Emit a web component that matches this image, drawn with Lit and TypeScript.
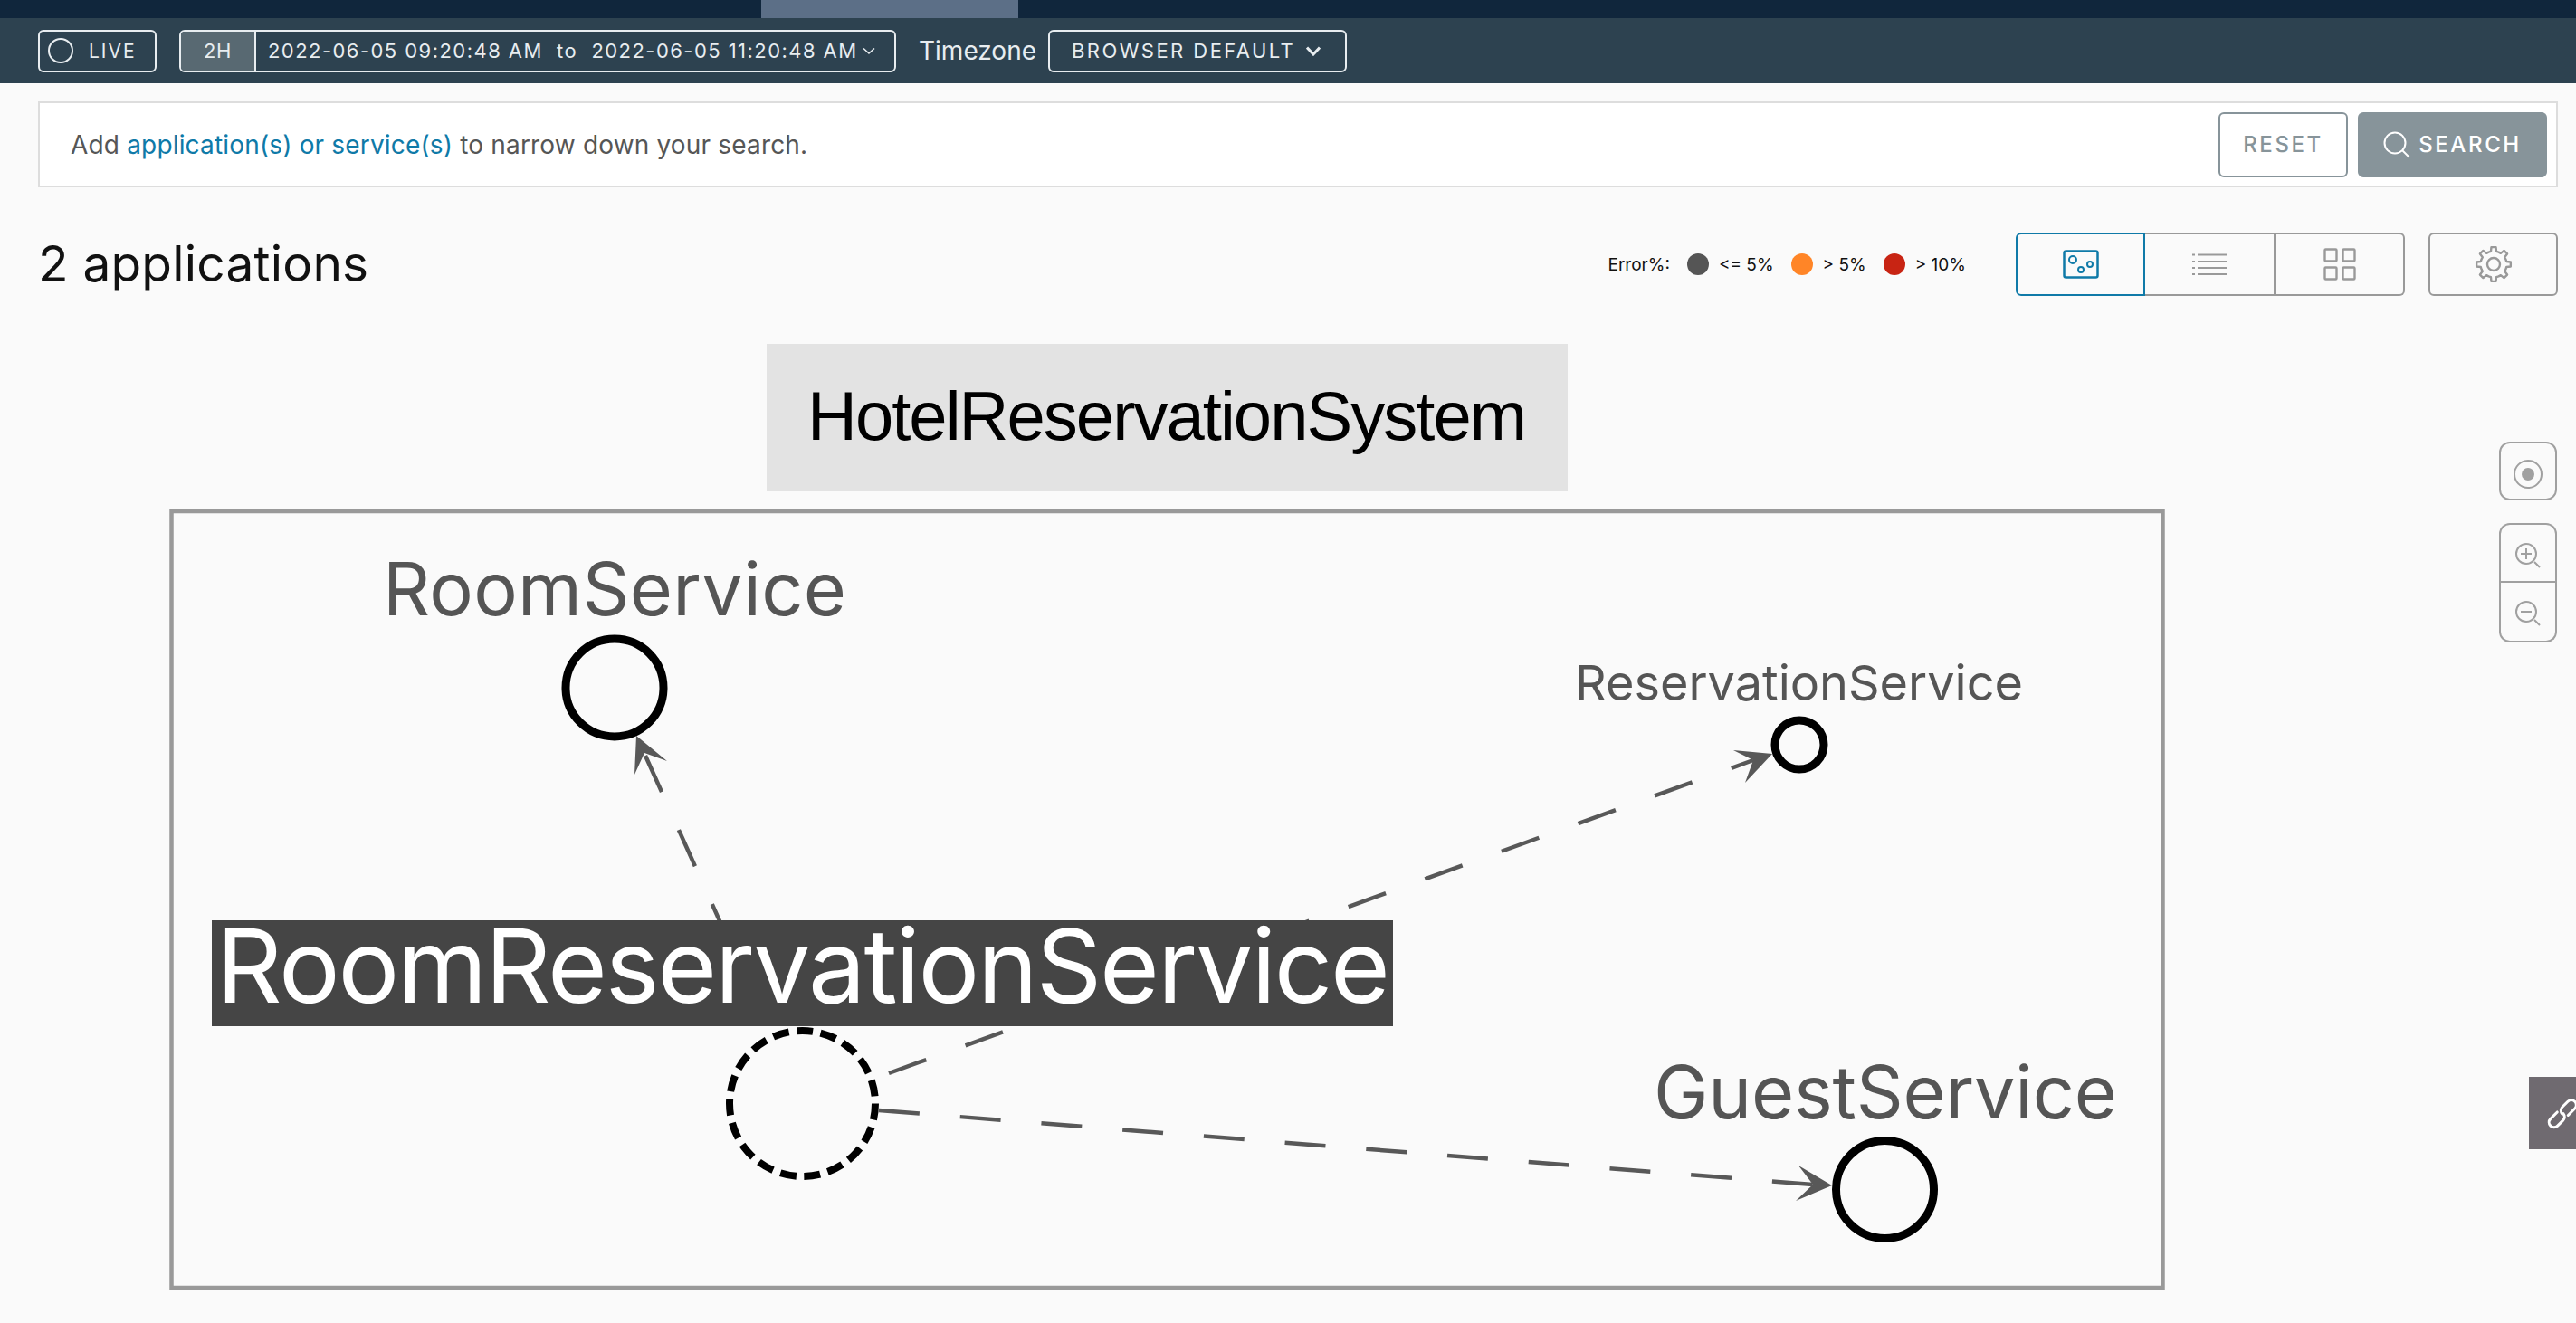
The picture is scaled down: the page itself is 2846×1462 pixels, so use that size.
import { LitElement, html, css, svg } from "lit";
import { customElement } from "lit/decorators.js";

// lobed outline for the settings cog
function gearPath(cx: number, cy: number, outer: number, inner: number, teeth: number) {
  const pts: string[] = [];
  const step = (Math.PI * 2) / teeth;
  for (let i = 0; i < teeth; i++) {
    const a = i * step - Math.PI / 2;
    const corners: [number, number][] = [
      [inner, a - step * 0.5],
      [inner, a - step * 0.27],
      [outer, a - step * 0.17],
      [outer, a + step * 0.17],
      [inner, a + step * 0.27],
    ];
    for (const [r, t] of corners) {
      pts.push(`${(cx + r * Math.cos(t)).toFixed(2)} ${(cy + r * Math.sin(t)).toFixed(2)}`);
    }
  }
  return "M" + pts.join("L") + "Z";
}

const chevron = (w: number, h: number, sw: number) => html`
  <svg width=${w} height=${h} viewBox="0 0 ${w} ${h}" fill="none" stroke="#e8edf0" stroke-width=${sw}>
    <path d="M1 1.5 L${w / 2} ${h - 2} L${w - 1} 1.5" />
  </svg>
`;

@customElement("app-root")
export class AppRoot extends LitElement {
  static styles = css`
    :host {
      display: block;
      width: 100%;
      height: 1462px;
      overflow: hidden;
      background: #fafafa;
      font-family: Inter, "Liberation Sans", sans-serif;
      color: #000;
    }

    .topnav {
      height: 20px;
      background: #10263c;
      padding-left: 841px;
    }
    .topnav-tab {
      width: 284px;
      height: 20px;
      background: #5c6f87;
    }

    .toolbar {
      height: 72px;
      background: #2d4250;
      display: flex;
      align-items: center;
      padding-left: 42px;
      box-sizing: border-box;
      color: #e8edf0;
    }
    .live {
      width: 131px;
      height: 47px;
      box-sizing: border-box;
      border: 2px solid #e8edf0;
      border-radius: 6px;
      display: flex;
      align-items: center;
      padding-left: 9px;
      gap: 17px;
      font-size: 21px;
      letter-spacing: 2px;
    }
    .range {
      margin-left: 25px;
      width: 792px;
      height: 47px;
      box-sizing: border-box;
      border: 2px solid #e8edf0;
      border-radius: 6px;
      display: flex;
      align-items: center;
      font-size: 22px;
      overflow: hidden;
    }
    .range-preset {
      width: 81px;
      height: 100%;
      background: #586972;
      border-right: 2px solid #e8edf0;
      display: flex;
      align-items: center;
      justify-content: center;
      flex: none;
      letter-spacing: 0.6px;
    }
    .range-text {
      margin-left: 13px;
      width: 652px;
      white-space: pre;
      letter-spacing: 1.45px;
      flex: none;
    }
    .range svg {
      margin-left: 5px;
      flex: none;
    }
    .tz-label {
      margin-left: 25px;
      font-size: 28px;
      width: 143px;
      flex: none;
    }
    .tz-select {
      width: 330px;
      height: 47px;
      box-sizing: border-box;
      border: 2px solid #e8edf0;
      border-radius: 6px;
      display: flex;
      align-items: center;
      padding-left: 24px;
      gap: 12px;
      font-size: 22px;
      letter-spacing: 2.45px;
      white-space: nowrap;
    }

    .search-box {
      margin: 20px 20px 0 42px;
      height: 95px;
      box-sizing: border-box;
      border: 2px solid #ddd;
      background: #fff;
      display: flex;
      align-items: center;
      padding: 0 10px 0 34px;
      font-size: 28px;
      letter-spacing: 0.17px;
      color: #565656;
    }
    .search-box a {
      color: #0f7aa8;
      text-decoration: none;
    }
    .search-text {
      flex: 1;
    }
    .btn {
      height: 72px;
      box-sizing: border-box;
      border-radius: 6px;
      display: flex;
      align-items: center;
      justify-content: center;
      font-size: 24px;
      font-weight: 500;
      letter-spacing: 2.6px;
      color: #87949a;
    }
    .btn-reset {
      width: 143px;
      border: 2px solid #87949a;
      background: #fff;
    }
    .btn-search {
      width: 209px;
      margin-left: 11px;
      background: #87949a;
      color: #fff;
      gap: 9px;
    }

    .heading {
      margin: 50px 20px 0 42px;
      height: 70px;
      display: flex;
      align-items: center;
    }
    .title {
      flex: 1;
      font-size: 55px;
      color: #111;
      letter-spacing: 0.2px;
      margin-top: -2px;
    }
    .legend {
      display: flex;
      align-items: center;
      font-size: 19px;
      color: #111;
      margin-right: 55px;
    }
    .dot {
      width: 24px;
      height: 24px;
      border-radius: 50%;
      margin: 0 11px 0 19px;
    }
    .views {
      display: flex;
      height: 70px;
    }
    .view {
      box-sizing: border-box;
      width: 145px;
      height: 70px;
      border: 2px solid #999;
      border-left-width: 0;
      display: flex;
      align-items: center;
      justify-content: center;
      border-right-width: 3px;
    }
    .view.active {
      width: 143px;
      border: 2px solid #0f7aa8;
      border-radius: 6px 0 0 6px;
    }
    .view.last {
      width: 142px;
      border-right-width: 2px;
      border-radius: 0 6px 6px 0;
    }
    .settings {
      box-sizing: border-box;
      width: 143px;
      height: 70px;
      margin-left: 26px;
      border: 2px solid #999;
      border-radius: 6px;
      display: flex;
      align-items: center;
      justify-content: center;
    }

    .canvas {
      position: relative;
      height: 1135px;
    }
    .diagram {
      position: absolute;
      left: 0;
      top: 0;
      font-family: Inter, "Liberation Sans", sans-serif;
    }
    .service {
      fill: #555;
      font-weight: 400;
    }
    .selected-text {
      fill: #fff;
      font-weight: 400;
    }
    .app-text {
      font-family: "Liberation Sans", Arial, sans-serif;
      fill: #000;
    }

    .map-controls {
      position: absolute;
      left: 2761px;
      top: 161px;
      width: 64px;
    }
    .map-btn {
      box-sizing: border-box;
      width: 64px;
      border: 2px solid #a0a0a0;
      display: flex;
      align-items: center;
      justify-content: center;
    }
    .recenter {
      height: 65px;
      border-radius: 12px;
      margin-bottom: 25px;
    }
    .recenter svg {
      margin-top: 6px;
    }
    .zoom-in {
      height: 66px;
      border-radius: 12px 12px 0 0;
    }
    .zoom-out {
      height: 66px;
      border-top: 0;
      border-radius: 0 0 12px 12px;
    }
    .link-tab {
      position: absolute;
      left: 2794px;
      top: 863px;
      width: 52px;
      height: 80px;
      background: #6f6a70;
      overflow: hidden;
    }
    .link-tab svg {
      position: absolute;
      left: 20px;
      top: 22px;
    }
  `;

  renderDiagram() {
    return svg`
      <rect x="189.5" y="565" width="2200" height="858" fill="none" stroke="#999" stroke-width="4.5" />

      <g stroke="#585858" stroke-width="4.5" fill="none">
        <path d="M713 835 L797 1022" stroke-dasharray="44 46" />
        <path d="M982 1186 L1937 840" stroke-dasharray="44 46" />
        <path d="M971 1227 L2003 1309" stroke-dasharray="45 45" />
      </g>
      <g fill="#585858">
        <path d="M703 813 L737 841 L712 832 L701 856 Z" />
        <path d="M1958 833 L1915 829 L1937 840 L1928 865 Z" />
        <path d="M2024 1310 L1987 1288 L2003 1309 L1984 1327 Z" />
      </g>

      <g fill="none" stroke="#000">
        <circle cx="679" cy="760" r="54" stroke-width="9" />
        <circle cx="1988" cy="823" r="27" stroke-width="9" />
        <circle cx="2082.5" cy="1314.5" r="54" stroke-width="9" />
        <circle cx="886.5" cy="1219.5" r="80.5" stroke-width="8" stroke-dasharray="18 8.6" />
      </g>

      <text class="service" x="423" y="680" font-size="81" textLength="512">RoomService</text>
      <text class="service" x="1740" y="774" font-size="54" textLength="495">ReservationService</text>
      <text class="service" x="1827" y="1236" font-size="81" textLength="512">GuestService</text>

      <rect x="847" y="380" width="885" height="163" fill="#e3e3e3" />
      <text class="app-text" x="892" y="486" font-size="76" textLength="795">HotelReservationSystem</text>

      <rect x="234" y="1017" width="1305" height="117" fill="#454545" />
      <text class="selected-text" x="239" y="1108" font-size="113" textLength="1297">RoomReservationService</text>
    `;
  }

  render() {
    const gray = "#999";
    return html`
      <div class="topnav"><div class="topnav-tab"></div></div>

      <div class="toolbar">
        <div class="live">
          <svg width="28" height="28" viewBox="0 0 28 28" fill="none" stroke="#e8edf0" stroke-width="2">
            <circle cx="14" cy="14" r="13" />
          </svg>
          <span>LIVE</span>
        </div>
        <div class="range">
          <div class="range-preset">2H</div>
          <div class="range-text">2022-06-05 09:20:48 AM  to  2022-06-05 11:20:48 AM</div>
          ${chevron(14, 9, 1.6)}
        </div>
        <div class="tz-label">Timezone</div>
        <div class="tz-select">
          <span>BROWSER DEFAULT</span>
          ${chevron(16, 11, 3)}
        </div>
      </div>

      <div class="search-box">
        <div class="search-text">Add <a>application(s) or service(s)</a> to narrow down your search.</div>
        <div class="btn btn-reset">RESET</div>
        <div class="btn btn-search">
          <svg width="30" height="30" viewBox="0 0 30 30" fill="none" stroke="#fff" stroke-width="2">
            <circle cx="13" cy="13" r="11.5" />
            <path d="M21 21 L29 29" />
          </svg>
          <span>SEARCH</span>
        </div>
      </div>

      <div class="heading">
        <div class="title">2 applications</div>
        <div class="legend">
          <span>Error%:</span>
          <span class="dot" style="background:#555"></span><span>&lt;= 5%</span>
          <span class="dot" style="background:#ff8527"></span><span>&gt; 5%</span>
          <span class="dot" style="background:#c82413"></span><span>&gt; 10%</span>
        </div>
        <div class="views">
          <div class="view active">
            <svg width="40" height="32" viewBox="0 0 40 32" fill="none" stroke="#0f7aa8">
              <rect x="1.5" y="1.5" width="37" height="29" rx="2" stroke-width="2.5" />
              <circle cx="11" cy="11" r="4" stroke-width="2" />
              <circle cx="20" cy="22" r="3" stroke-width="2" />
              <circle cx="30" cy="16" r="3" stroke-width="2" />
            </svg>
          </div>
          <div class="view">
            <svg width="38" height="25" viewBox="0 0 38 25" fill="none" stroke=${gray} stroke-width="2">
              <path d="M6 1.5H38M6 9H38M6 16H38M6 23H38" />
              <path d="M0 1.5H3M0 9H3M0 16H3M0 23H3" />
            </svg>
          </div>
          <div class="view last">
            <svg width="36" height="36" viewBox="0 0 36 36" fill="none" stroke=${gray} stroke-width="2.4">
              <rect x="1.5" y="1.5" width="13" height="13" rx="1" />
              <rect x="21.5" y="1.5" width="13" height="13" rx="1" />
              <rect x="1.5" y="21.5" width="13" height="13" rx="1" />
              <rect x="21.5" y="21.5" width="13" height="13" rx="1" />
            </svg>
          </div>
        </div>
        <div class="settings">
          <svg width="42" height="42" viewBox="0 0 42 42" fill="none" stroke=${gray} stroke-width="2.4" stroke-linejoin="round">
            <path d=${gearPath(21, 21, 19, 14.5, 8)} />
            <circle cx="21" cy="21" r="7" />
          </svg>
        </div>
      </div>

      <div class="canvas">
        <svg class="diagram" width="2846" height="1135" viewBox="0 327 2846 1135">
          ${this.renderDiagram()}
        </svg>

        <div class="map-controls">
          <div class="map-btn recenter">
            <svg width="32" height="32" viewBox="0 0 32 32">
              <circle cx="16" cy="16" r="15" fill="none" stroke="#a0a0a0" stroke-width="2" />
              <circle cx="16" cy="16" r="7" fill="#a0a0a0" />
            </svg>
          </div>
          <div class="map-btn zoom-in">
            <svg width="40" height="40" viewBox="0 0 40 40" fill="none" stroke="#a0a0a0" stroke-width="2">
              <circle cx="18" cy="21" r="11" />
              <path d="M12 21H24M18 15V27M27 30L33 36" />
            </svg>
          </div>
          <div class="map-btn zoom-out">
            <svg width="40" height="40" viewBox="0 0 40 40" fill="none" stroke="#a0a0a0" stroke-width="2">
              <circle cx="18" cy="20" r="11" />
              <path d="M12 20H24M27 29L33 35" />
            </svg>
          </div>
        </div>

        <div class="link-tab">
          <svg width="36" height="36" viewBox="0 0 36 36" fill="none" stroke="#fff" stroke-width="3" stroke-linecap="round">
            <g transform="rotate(-45 18 18)">
              <path d="M14 12.5H3.5a5.5 5.5 0 0 0 0 11H12a5.5 5.5 0 0 0 5.5-5" />
              <path d="M20 23.5H30.5a5.5 5.5 0 0 0 0-11H22a5.5 5.5 0 0 0-5.5 5" />
            </g>
          </svg>
        </div>
      </div>
    `;
  }
}
